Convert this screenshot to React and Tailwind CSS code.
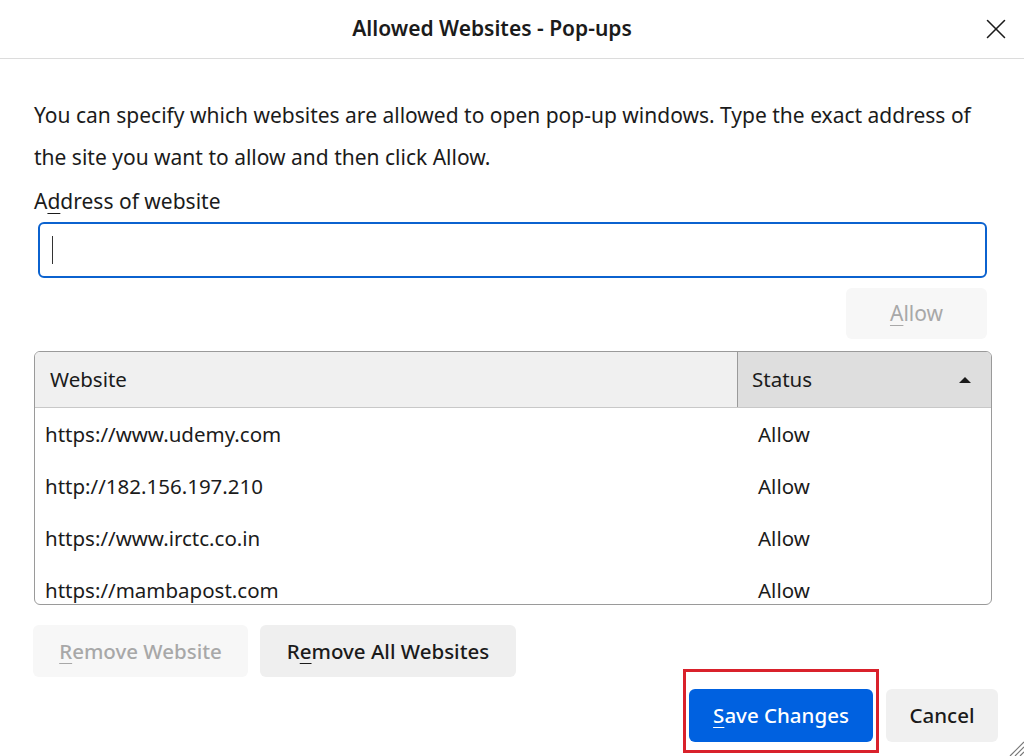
import { X } from 'lucide-react'

const sites = [
  ['https://www.udemy.com', 'Allow'],
  ['http://182.156.197.210', 'Allow'],
  ['https://www.irctc.co.in', 'Allow'],
  ['https://mambapost.com', 'Allow'],
]

function U({ children }) {
  return <span className="underline underline-offset-4 decoration-1">{children}</span>
}

export default function App() {
  return (
    <div className="relative w-[1024px] h-[756px] bg-white text-[#1b1b1b] overflow-hidden" style={{ fontFamily: '"Noto Sans", "Open Sans", sans-serif' }}>
      <div className="h-[59px] border-b border-[#dcdcdc] flex items-center relative">
        <div className="w-full text-center pr-[40px] text-[21px] font-semibold">Allowed Websites - Pop-ups</div>
        <X className="absolute right-[11px] top-[12px] w-[34px] h-[34px]" strokeWidth={1.1} />
      </div>

      <div className="px-[34px]">
        <p className="mt-[35px] text-[21px] leading-[42px]">
          You can specify which websites are allowed to open pop-up windows. Type the exact address of the site you want to allow and then click Allow.
        </p>
        <div className="mt-[10px] text-[21px] leading-[26px]">A<U>d</U>dress of website</div>
        <div className="mt-[8px] ml-[4px] mr-[3px] h-[56px] border-2 border-[#0b62cf] rounded-[6px] flex items-center px-[12px]">
          <div className="w-px h-[28px] bg-[#333]" />
        </div>
        <div className="flex justify-end mt-[10px] mr-[3px]">
          <div className="w-[141px] h-[51px] rounded-[6px] bg-[#f7f7f7] text-[#a8a8a8] text-[21px] flex items-center justify-center"><U>A</U>llow</div>
        </div>

        <div className="mt-[12px] mr-[-2px] h-[254px] border border-[#9a9a9a] rounded-[6px] overflow-hidden text-[20.5px]">
          <div className="h-[56px] flex border-b border-[#c8c8c8]">
            <div className="w-[703px] bg-[#f0f0f0] flex items-center pl-[15px] border-r border-[#9a9a9a]">Website</div>
            <div className="flex-1 bg-[#dedede] flex items-center pl-[14px] pr-[20px] justify-between">
              <span>Status</span>
              <svg width="12" height="8" viewBox="0 0 12 8"><path d="M0 7 L6 1 L12 7 Z" fill="#1b1b1b" /></svg>
            </div>
          </div>
          {sites.map(([s, st]) => (
            <div key={s} className="h-[52px] flex items-center">
              <div className="w-[703px] pl-[10px]">{s}</div>
              <div className="pl-[20px]">{st}</div>
            </div>
          ))}
        </div>

        <div className="mt-[20px] flex gap-[12px] ml-[-1px]">
          <div className="w-[215px] h-[52px] rounded-[6px] bg-[#f7f7f7] text-[#a8a8a8] text-[20.5px] flex items-center justify-center font-medium"><U>R</U>emove Website</div>
          <div className="w-[256px] h-[52px] rounded-[6px] bg-[#efefef] text-[20.5px] flex items-center justify-center font-medium">R<U>e</U>move All Websites</div>
        </div>
      </div>

      <div className="absolute left-[683px] top-[669px] w-[196px] h-[84px] border-[3px] border-[#d9212b]" />
      <div className="absolute left-[689px] top-[689px] w-[184px] h-[53px] rounded-[6px] bg-[#0061e0] text-white text-[20.5px] font-medium flex items-center justify-center"><U>S</U>ave Changes</div>
      <div className="absolute left-[886px] top-[689px] w-[112px] h-[53px] rounded-[6px] bg-[#f0f0f0] text-[20.5px] font-medium flex items-center justify-center">Cancel</div>

      <svg className="absolute right-0 bottom-0" width="20" height="20" viewBox="0 0 20 20">
        <path d="M20 6 L6 20 M20 11 L11 20 M20 16 L16 20" stroke="#777" strokeWidth="1.2" />
      </svg>
    </div>
  )
}
